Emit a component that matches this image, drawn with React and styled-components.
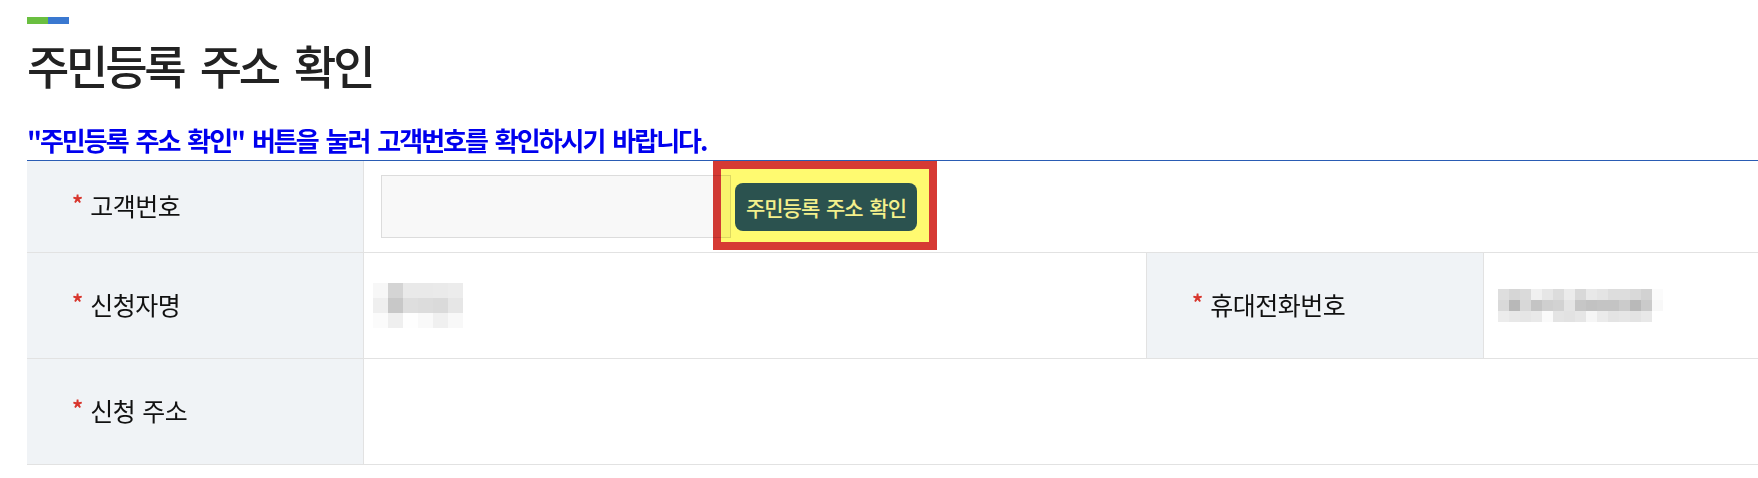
import React from 'react';
import styled, { createGlobalStyle } from 'styled-components';

const GlobalStyle = createGlobalStyle`
    body {
        margin: 0;
        background: #fff;
        font-family: "Noto Sans CJK KR", "Noto Sans", sans-serif;
        color: #111;
    }
    * { box-sizing: border-box; }
`

const nameBlur = [
    ['#f7f7f7', '#d4d4d4', '#e9e9e9', '#e9e9e9', '#eaeaea', '#ececec'],
    ['#efefef', '#c8c8c8', '#dedede', '#dcdcdc', '#dadada', '#e6e6e6'],
    ['#fbfbfb', '#efefef', '#fefefe', '#f9f9f9', '#f0f0f0', '#f8f8f8'],
]

const phoneBlur = [
    ['#dedede', '#d6d6d6', '#dadada', '#f0f0f0', '#e6e6e6', '#dcdcdc', '#ebebeb', '#d8d8d8', '#e8e8e8', '#e4e4e4', '#dddddd', '#dddddd', '#d9d9d9', '#d2d2d2', '#fbfbfb', '#ffffff'],
    ['#d9d9d9', '#b8b8b8', '#d8d8d8', '#c4c4c4', '#cfcfcf', '#d2d2d2', '#e4e4e4', '#c6c6c6', '#c2c2c2', '#c4c4c4', '#c4c4c4', '#cbcbcb', '#b9b9b9', '#cacaca', '#f8f8f8', '#ffffff'],
    ['#ececec', '#e8e8e8', '#e6e6e6', '#e9e9e9', '#fafafa', '#e4e4e4', '#e2e2e2', '#e6e6e6', '#f6f6f6', '#ebebeb', '#e4e4e4', '#e6e6e6', '#e3e3e3', '#e8e8e8', '#ffffff', '#ffffff'],
]

const Mosaic = ({ cells, size }) => (
    <MosaicGrid $cols={cells[0].length} $size={size}>
        {cells.flat().map((c, i) => (
            <span key={i} style={{ background: c }} />
        ))}
    </MosaicGrid>
)

const Label = ({ children }) => (
    <LabelText>
        <Star>*</Star>
        {children}
    </LabelText>
)

const App = () => {
    return (
        <Page>
            <GlobalStyle />
            <Accent>
                <AccentSeg $color="#6abf40" />
                <AccentSeg $color="#3a78d0" />
            </Accent>
            <Title>주민등록 주소 확인</Title>
            <Notice>"주민등록 주소 확인" 버튼을 눌러 고객번호를 확인하시기 바랍니다.</Notice>

            <Table>
                <LabelCell $h={92}>
                    <Label>고객번호</Label>
                </LabelCell>
                <ValueCell $h={92} $span={3} $pad={17}>
                    <Input type="text" />
                    <ButtonWrap>
                        <CheckButton type="button">주민등록 주소 확인</CheckButton>
                        <Highlight />
                    </ButtonWrap>
                </ValueCell>

                <LabelCell $h={106}>
                    <Label>신청자명</Label>
                </LabelCell>
                <ValueCell $h={106} $pad={9}>
                    <Mosaic cells={nameBlur} size={15} />
                </ValueCell>
                <LabelCell $h={106} $side>
                    <Label>휴대전화번호</Label>
                </LabelCell>
                <ValueCell $h={106} $pad={14}>
                    <Mosaic cells={phoneBlur} size={11} />
                </ValueCell>

                <LabelCell $h={106}>
                    <Label>신청 주소</Label>
                </LabelCell>
                <ValueCell $h={106} $span={3} />
            </Table>
        </Page>
    );
}

const Page = styled.div`
    padding: 17px 0 0 27px;
    overflow: hidden;
`
const Accent = styled.div`
    display: flex;
    height: 7px;
`
const AccentSeg = styled.span`
    width: 21px;
    background: ${p => p.$color};
`
const Title = styled.h1`
    margin: 17px 0 0 0;
    font-size: 46px;
    font-weight: 500;
    line-height: 1;
    letter-spacing: -3.2px;
    word-spacing: 9px;
    color: #222;
`
const Notice = styled.p`
    margin: 40px 0 0 0;
    font-size: 26px;
    font-weight: 700;
    line-height: 1;
    letter-spacing: -2px;
    word-spacing: 4px;
    color: #0000ee;
    padding-bottom: 7px;
`
const Table = styled.div`
    display: grid;
    grid-template-columns: 337px 782px 338px 1fr;
    border-top: 1px solid #2a5cb4;
`
const LabelCell = styled.div`
    height: ${p => p.$h}px;
    display: flex;
    align-items: center;
    padding-left: 45px;
    padding-bottom: 4px;
    background: #f0f3f6;
    border-bottom: 1px solid #e2e2e2;
    border-right: 1px solid #e2e2e2;
    ${p => p.$side && 'border-left: 1px solid #e2e2e2;'}
`
const ValueCell = styled.div`
    grid-column: span ${p => p.$span || 1};
    height: ${p => p.$h}px;
    display: flex;
    align-items: center;
    gap: 4px;
    padding-left: ${p => p.$pad || 0}px;
    border-bottom: 1px solid #e2e2e2;
`
const LabelText = styled.span`
    font-size: 25px;
    font-weight: 400;
    letter-spacing: -0.5px;
    word-spacing: 2px;
    color: #111;
    display: flex;
    align-items: flex-start;
`
const Star = styled.span`
    color: #d8352c;
    font-size: 22px;
    font-weight: 700;
    line-height: 1;
    margin: 4px 7px 0 0;
    letter-spacing: 0;
`
const Input = styled.input`
    width: 350px;
    height: 63px;
    background: #f8f8f8;
    border: 1px solid #dcdcdc;
    outline: none;
    font-family: inherit;
`
const ButtonWrap = styled.div`
    position: relative;
    display: flex;
`
const CheckButton = styled.button`
    position: relative;
    z-index: 2;
    width: 182px;
    height: 48px;
    padding: 0;
    border: none;
    border-radius: 8px;
    background: #2b524f;
    color: #f4f08c;
    font-family: "Noto Sans CJK KR", sans-serif;
    font-size: 21px;
    font-weight: 500;
    letter-spacing: -1px;
    word-spacing: 3px;
`
const Highlight = styled.div`
    position: absolute;
    z-index: 1;
    top: -22px;
    left: -22px;
    right: -20px;
    bottom: -19px;
    border: 8px solid #d63a34;
    background: #fffa70;
    mix-blend-mode: multiply;
    pointer-events: none;
`
const MosaicGrid = styled.div`
    display: grid;
    grid-template-columns: repeat(${p => p.$cols}, ${p => p.$size}px);
    grid-auto-rows: ${p => p.$size}px;
`

export default App;
